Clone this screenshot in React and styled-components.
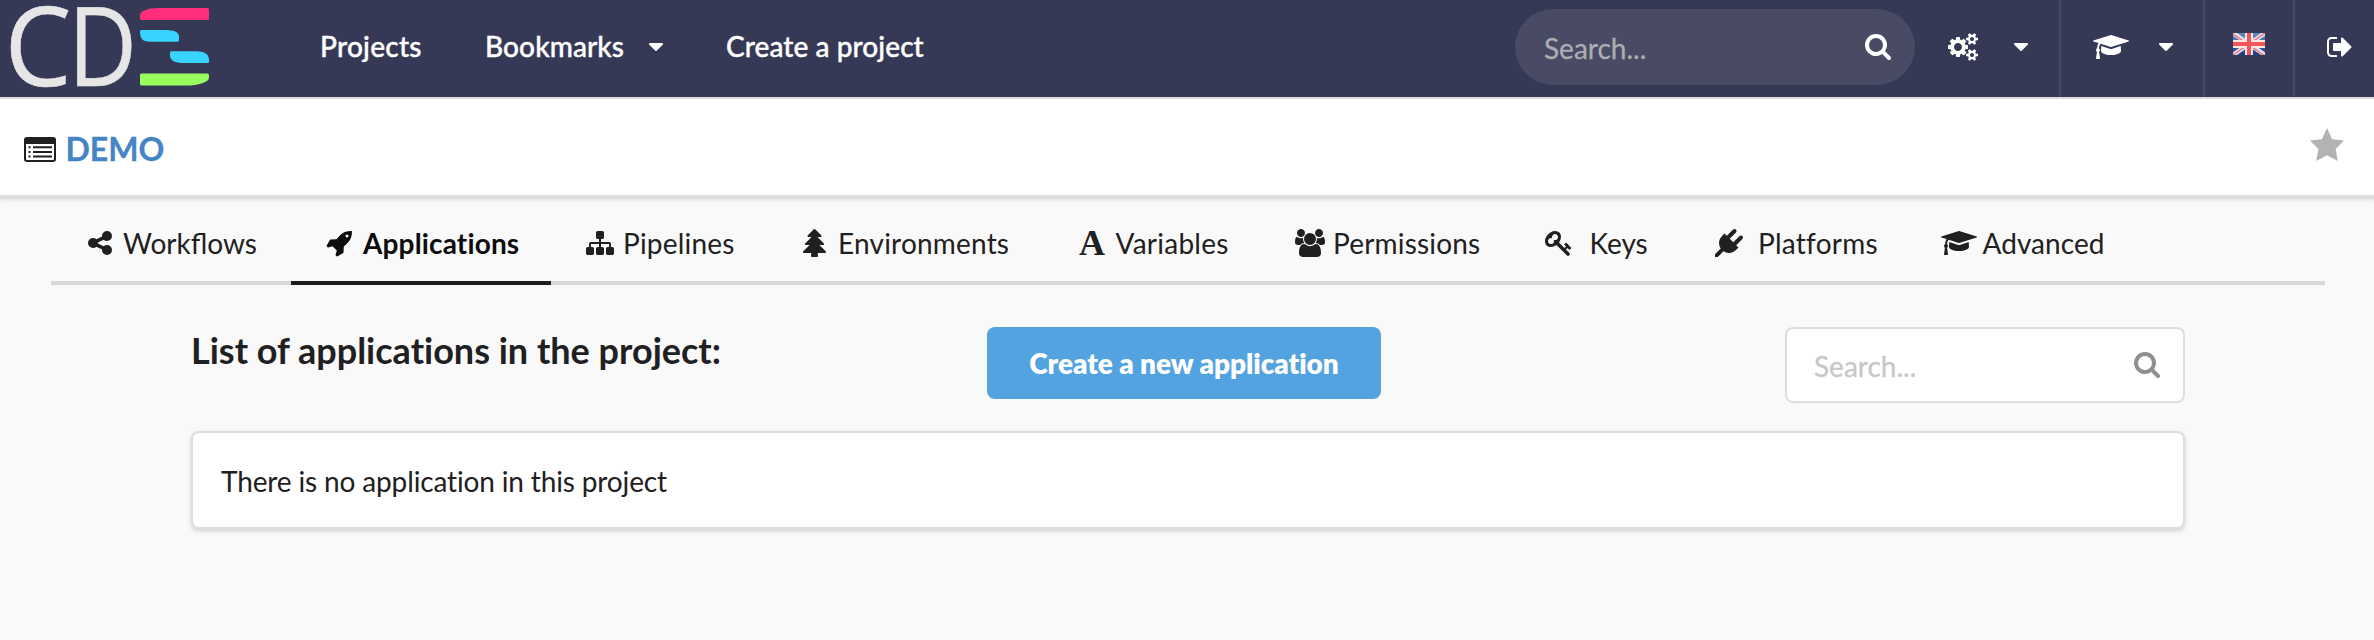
import React from 'react';
import styled, { createGlobalStyle } from 'styled-components';

const GlobalStyle = createGlobalStyle`
  *, *::before, *::after { box-sizing: border-box; }
  html, body { margin: 0; background: #f9f9f9; }
  body {
    font-family: Lato, "Liberation Sans", sans-serif;
    font-size: 28px;
    line-height: 40px;
    color: #1f2021;
  }
  svg { display: block; flex: none; }
`;

/* Icon outlines on a 1792 unit grid, 64 units per pixel at the base size */
const ICONS = {
  search: { x: 64, w: 1664, d: 'M1152 704q0-185-131.5-316.5t-316.5-131.5-316.5 131.5-131.5 316.5 131.5 316.5 316.5 131.5 316.5-131.5 131.5-316.5zm512 832q0 52-38 90t-90 38q-54 0-90-38l-343-342q-179 124-399 124-143 0-273.5-55.5t-225-150-150-225-55.5-273.5 55.5-273.5 150-225 225-150 273.5-55.5 273.5 55.5 225 150 150 225 55.5 273.5q0 220-124 399l343 343q37 37 37 90z' },
  cogs: { x: 0, w: 1920, d: 'M832 896q0-106-75-181t-181-75-181 75-75 181 75 181 181 75 181-75 75-181zm768 512q0-52-38-90t-90-38-90 38-38 90q0 53 37.5 90.5t90.5 37.5 90.5-37.5 37.5-90.5zm0-1024q0-52-38-90t-90-38-90 38-38 90q0 53 37.5 90.5t90.5 37.5 90.5-37.5 37.5-90.5zm-384 421v185q0 10-7 19.5t-16 10.5l-155 24q-11 35-32 76 34 48 90 115 7 11 7 20 0 12-7 19-23 30-82.5 89.5t-78.5 59.5q-11 0-21-7l-115-90q-37 19-77 31-11 108-23 155-7 24-30 24h-186q-11 0-20-7.5t-10-17.5l-23-153q-34-10-75-31l-118 89q-7 7-20 7-11 0-21-8-144-133-144-160 0-9 7-19 10-14 41-53t47-61q-23-44-35-82l-152-24q-10-1-17-9.5t-7-19.5v-185q0-10 7-19.5t16-10.5l155-24q11-35 32-76-34-48-90-115-7-11-7-20 0-12 7-20 22-30 82-89t79-59q11 0 21 7l115 90q34-18 77-32 11-108 23-154 7-24 30-24h186q11 0 20 7.5t10 17.5l23 153q34 10 75 31l118-89q8-7 20-7 11 0 21 8 144 133 144 160 0 8-7 19-12 16-42 54t-45 60q23 48 34 82l152 23q10 2 17 10.5t7 19.5zm640 533v140q0 16-149 31-12 27-30 52 51 113 51 138 0 4-4 7-122 71-124 71-8 0-46-47t-52-68q-20 2-30 2t-30-2q-14 21-52 68t-46 47q-2 0-124-71-4-3-4-7 0-25 51-138-18-25-30-52-149-15-149-31v-140q0-16 149-31 13-29 30-52-51-113-51-138 0-4 4-7 4-2 35-20t59-34 30-16q8 0 46 46.5t52 67.5q20-2 30-2t30 2q51-71 92-112l6-2q4 0 124 70 4 3 4 7 0 25-51 138 17 23 30 52 149 15 149 31zm0-1024v140q0 16-149 31-12 27-30 52 51 113 51 138 0 4-4 7-122 71-124 71-8 0-46-47t-52-68q-20 2-30 2t-30-2q-14 21-52 68t-46 47q-2 0-124-71-4-3-4-7 0-25 51-138-18-25-30-52-149-15-149-31v-140q0-16 149-31 13-29 30-52-51-113-51-138 0-4 4-7 4-2 35-20t59-34 30-16q8 0 46 46.5t52 67.5q20-2 30-2t30 2q51-71 92-112l6-2q4 0 124 70 4 3 4 7 0 25-51 138 17 23 30 52 149 15 149 31z' },
  graduation: { x: 0, w: 2304, d: 'M1774 836l18 316q4 69-82 128t-235 93.5-323 34.5-323-34.5-235-93.5-82-128l18-316 574 181q22 7 48 7t48-7zm530-324q0 23-22 31l-1120 352q-4 1-10 1t-10-1l-652-206q-43 34-71 111.5t-34 178.5q63 36 63 109 0 69-58 107l58 433q2 14-8 25-9 11-24 11h-192q-15 0-24-11-10-11-8-25l58-433q-58-38-58-107 0-73 65-111 11-207 98-330l-333-104q-22-8-22-31t22-31l1120-352q4-1 10-1t10 1l1120 352q22 8 22 31z' },
  signOut: { x: 64, w: 1600, d: 'M704 1440q0 4 1 20t.5 26.5-3 23.5-10 19.5-20.5 6.5h-320q-119 0-203.5-84.5t-84.5-203.5v-704q0-119 84.5-203.5t203.5-84.5h320q13 0 22.5 9.5t9.5 22.5q0 4 1 20t.5 26.5-3 23.5-10 19.5-20.5 6.5h-320q-66 0-113 47t-47 113v704q0 66 47 113t113 47h312l11.5 1 11.5 3 8 5.5 7 9 2 13.5zm928-544q0 26-19 45l-544 544q-19 19-45 19t-45-19-19-45v-288h-448q-26 0-45-19t-19-45v-384q0-26 19-45t45-19h448v-288q0-26 19-45t45-19 45 19l544 544q19 19 19 45z' },
  share: { x: 128, w: 1536, d: 'M1344 1024q133 0 226.5 93.5t93.5 226.5-93.5 226.5-226.5 93.5-226.5-93.5-93.5-226.5q0-12 2-34l-360-180q-92 86-218 86-133 0-226.5-93.5t-93.5-226.5 93.5-226.5 226.5-93.5q126 0 218 86l360-180q-2-22-2-34 0-133 93.5-226.5t226.5-93.5 226.5 93.5 93.5 226.5-93.5 226.5-226.5 93.5q-126 0-218-86l-360 180q2 22 2 34t-2 34l360 180q92-86 218-86z' },
  rocket: { x: 64, w: 1600, d: 'M1440 448q0-40-28-68t-68-28-68 28-28 68 28 68 68 28 68-28 28-68zm224-288q0 249-75.5 430.5t-253.5 360.5q-81 80-195 176l-20 379q-2 16-16 26l-384 224q-7 4-16 4-12 0-23-9l-64-64q-13-14-8-32l85-276-281-281-276 85q-3 1-9 1-14 0-23-9l-64-64q-17-19-5-39l224-384q10-14 26-16l379-20q96-114 176-195 188-187 358-258t431-71q14 0 24 9.5t10 22.5z' },
  sitemap: { x: 0, w: 1792, d: 'M1792 1248v320q0 40-28 68t-68 28h-320q-40 0-68-28t-28-68v-320q0-40 28-68t68-28h96v-192h-512v192h96q40 0 68 28t28 68v320q0 40-28 68t-68 28h-320q-40 0-68-28t-28-68v-320q0-40 28-68t68-28h96v-192h-512v192h96q40 0 68 28t28 68v320q0 40-28 68t-68 28h-320q-40 0-68-28t-28-68v-320q0-40 28-68t68-28h96v-192q0-52 38-90t90-38h512v-192h-96q-40 0-68-28t-28-68v-320q0-40 28-68t68-28h320q40 0 68 28t28 68v320q0 40-28 68t-68 28h-96v192h512q52 0 90 38t38 90v192h96q40 0 68 28t28 68z' },
  tree: { x: 160, w: 1472, d: 'M1632 1472q0 26-19 45t-45 19h-462q1 17 6 87.5t5 108.5q0 25-18 42.5t-43 17.5h-320q-25 0-43-17.5t-18-42.5q0-38 5-108.5t6-87.5h-462q-26 0-45-19t-19-45 19-45l402-403h-229q-26 0-45-19t-19-45 19-45l402-403h-197q-26 0-45-19t-19-45 19-45l384-384q19-19 45-19t45 19l384 384q19 19 19 45t-19 45-45 19h-197l402 403q19 19 19 45t-19 45-45 19h-229l402 403q19 19 19 45z' },
  users: { x: 0, w: 1920, d: 'M593 896q-162 5-265 128h-134q-82 0-138-40.5t-56-118.5q0-353 124-353 6 0 43.5 21t97.5 42.5 119 21.5q67 0 133-23-5 37-5 66 0 139 81 256zm1071 637q0 120-73 189.5t-194 69.5h-874q-121 0-194-69.5t-73-189.5q0-53 3.5-103.5t14-109 26.5-108.5 43-97.5 62-81 85.5-53.5 111.5-20q10 0 43 21.5t73 48 107 48 135 21.5 135-21.5 107-48 73-48 43-21.5q61 0 111.5 20t85.5 53.5 62 81 43 97.5 26.5 108.5 14 109 3.5 103.5zm-1024-1277q0 106-75 181t-181 75-181-75-75-181 75-181 181-75 181 75 75 181zm704 384q0 159-112.5 271.5t-271.5 112.5-271.5-112.5-112.5-271.5 112.5-271.5 271.5-112.5 271.5 112.5 112.5 271.5zm576 225q0 78-56 118.5t-138 40.5h-134q-103-123-265-128 81-117 81-256 0-29-5-66 66 23 133 23 59 0 119-21.5t97.5-42.5 43.5-21q124 0 124 353zm-128-609q0 106-75 181t-181 75-181-75-75-181 75-181 181-75 181 75 75 181z' },
  key: { x: 64, w: 1792, d: 'M832 512q0-80-56-136t-136-56-136 56-56 136q0 42 19 83-41-19-83-19-80 0-136 56t-56 136 56 136 136 56 136-56 56-136q0-42-19-83 41 19 83 19 80 0 136-56t56-136zm851 704q0 17-49 66t-66 49q-9 0-28.5-16t-36.5-33-38.5-40-24.5-26l-96 96 220 220q28 28 28 68 0 42-39 81t-81 39q-40 0-68-28l-671-671q-176 131-365 131-163 0-265.5-102.5t-102.5-265.5q0-160 95-313t248-248 313-95q163 0 265.5 102.5t102.5 265.5q0 189-131 365l355 355 96-96q-3-3-26-24.5t-40-38.5-33-36.5-16-28.5q0-17 49-66t66-49q13 0 23 10 6 6 46 44.5t82 79.5 86.5 86 73 78 28.5 41z' },
  plug: { x: 0, w: 1792, d: 'M1755 453q37 38 37 90.5t-37 90.5l-401 400 150 150-160 160q-163 163-389.5 186.5t-411.5-100.5l-362 362h-181v-181l362-362q-124-185-100.5-411.5t186.5-389.5l160-160 150 150 400-401q38-37 91-37t90 37 37 90.5-37 90.5l-400 401 234 234 401-400q38-37 91-37t90 37z' },
  caret: { x: 384, w: 896, d: 'M1280 704q0 26-19 45l-384 384q-19 19-45 19t-45-19l-384-384q-19-19-19-45t19-45 45-19h768q26 0 45 19t19 45z' },
};

function Icon({ name }) {
  const { x, w, d } = ICONS[name];
  return (
    <svg width={w / 64} height="28" viewBox={`${x} 0 ${w} 1792`} fill="currentColor" overflow="visible" aria-hidden="true">
      <path d={d} />
    </svg>
  );
}

const Page = styled.div`
  min-height: 100vh;
  background: #f9f9f9;
`;

const TopBar = styled.header`
  display: flex;
  height: 99px;
  background: #353955;
  border-bottom: 2px solid #dedede;
  color: #fff;
`;

const LogoLink = styled.a`
  width: 320px;
  flex: none;
`;

const NavItem = styled.a`
  display: flex;
  align-items: center;
  height: 92px;
  flex: none;
  width: ${(p) => p.$width}px;
  font-weight: 500;
  letter-spacing: ${(p) => p.$track || 0}px;
  white-space: nowrap;
  -webkit-text-stroke: 0.4px #fff;
`;

const NavCaret = styled.span`
  margin-left: auto;
  margin-right: 63px;
  padding-top: 2px;
`;

const GlobalSearch = styled.div`
  display: flex;
  align-items: center;
  justify-content: space-between;
  width: 400px;
  height: 76px;
  margin: 9px 0 0 auto;
  padding: 2px 23px 0 29px;
  border-radius: 38px;
  background: #484b63;
`;

const Placeholder = styled.span`
  color: ${(p) => p.$color};
  -webkit-text-stroke: 0.3px ${(p) => p.$color};
`;

const MenuCell = styled.div`
  display: flex;
  align-items: center;
  justify-content: space-between;
  height: 97px;
  padding-bottom: 3px;
  width: ${(p) => p.$width}px;
  padding-left: ${(p) => p.$left}px;
  padding-right: ${(p) => p.$right}px;
  border-right: ${(p) => (p.$last ? 'none' : '2px solid #45496a')};
`;

const FlagBox = styled.span`
  padding-bottom: 6px;
`;

const ProjectBar = styled.section`
  display: flex;
  align-items: center;
  justify-content: space-between;
  height: 96px;
  padding: 0 30px 0 24px;
  background: #fff;
  box-shadow: 0 4px 0 #dedede, 0 4px 5px rgba(0, 0, 0, 0.18);
`;

const ProjectName = styled.h1`
  display: flex;
  align-items: center;
  gap: 9.5px;
  margin: 0;
  padding-top: 4px;
  font-size: 32px;
  font-weight: 700;
  color: #4585c6;
  -webkit-text-stroke: 0.3px #4585c6;
`;

const StarBox = styled.span`
  padding-bottom: 5px;
`;

const Tabs = styled.nav`
  display: flex;
  width: 2274px;
  height: 90px;
  margin-left: 51px;
  border-bottom: 4px solid #d8d8d8;
`;

const Tab = styled.a`
  display: flex;
  align-items: center;
  flex: none;
  width: ${(p) => p.$width}px;
  height: 90px;
  padding: 10px 0 0 32px;
  border-bottom: 4px solid ${(p) => (p.$active ? '#1b1c1d' : 'transparent')};
  font-weight: ${(p) => (p.$active ? 700 : 400)};
  letter-spacing: ${(p) => p.$track || 0}px;
  color: ${(p) => (p.$active ? '#0d0d0e' : '#1f2021')};
  white-space: nowrap;
`;

const TabIcon = styled.span`
  display: flex;
  justify-content: center;
  width: 33px;
  height: 28px;
  margin-right: ${(p) => (p.$wide ? 13 : 7)}px;
`;

const SerifLetter = styled.span`
  font: 700 36px/28px "Liberation Serif", serif;
`;

const Content = styled.main`
  width: 1994px;
  margin: 42px 0 0 191px;
`;

const ListHeader = styled.div`
  display: flex;
  justify-content: space-between;
  align-items: flex-start;
  height: 104px;
`;

const ListTitle = styled.h2`
  width: 594px;
  margin: 0;
  padding-top: 3px;
  font-size: 36px;
  line-height: 40px;
  font-weight: 700;
  font-variant-ligatures: none;
  white-space: nowrap;
`;

const CreateButton = styled.button`
  width: 394px;
  height: 72px;
  margin-right: 202px;
  padding: 0 0 1px;
  border: 0;
  border-radius: 8px;
  background: #54a3e1;
  color: #fff;
  font: 800 28px/40px Lato, "Liberation Sans", sans-serif;
  letter-spacing: -0.05px;
  white-space: nowrap;
`;

const ListSearch = styled.div`
  display: flex;
  align-items: center;
  justify-content: space-between;
  width: 400px;
  height: 76px;
  padding: 2px 22px 0 27px;
  border: 2px solid #dededf;
  border-radius: 8px;
  background: #fff;
  color: #8f8f8f;
`;

const EmptyCard = styled.div`
  height: 98px;
  padding: 28px;
  border: 2px solid #dededf;
  border-radius: 8px;
  background: #fff;
  box-shadow: 0 2px 4px rgba(34, 36, 38, 0.18);
  letter-spacing: -0.14px;
`;

function Logo() {
  return (
    <svg width="220" height="97" viewBox="0 0 220 97" aria-label="CDS">
      <g fill="#e6e6e6" stroke="#e6e6e6" strokeWidth="0.5" fontFamily='"Open Sans", "Noto Sans", sans-serif' fontSize="109">
        <text x="4.500" y="86" textLength="67" lengthAdjust="spacingAndGlyphs">C</text>
        <text x="68" y="86" textLength="69" lengthAdjust="spacingAndGlyphs">D</text>
      </g>
      <path fill="#ff2f7e" d="M159 8H207.500Q209 8 209 9.500V18.500Q209 20 207.500 20H141.500Q140 20 140 18V15.500C140 11.500 147 8 159 8Z" />
      <path fill="#38d4ff" d="M141.500 30H166Q179 30 179 37V40Q179 41.700 177.500 41.700H150Q140 41.700 140 33V31.500Q140 30 141.500 30Z" />
      <path fill="#38d4ff" d="M171.500 51.300H196Q209 51.300 209 60V61.500Q209 63 207.500 63H184Q170 63 170 55.500V53Q170 51.300 171.500 51.300Z" />
      <path fill="#9aff5c" d="M141.500 73.500H207Q209 73.500 209 75.500V77.500C209 82 199 85.600 185 85.600H141.500Q140 85.600 140 84V75Q140 73.500 141.500 73.500Z" />
    </svg>
  );
}

function ListWindowIcon() {
  return (
    <svg width="32" height="25" viewBox="0 0 32 25" aria-hidden="true">
      <path fill="#1f2021" fillRule="evenodd" d="M3 0H29Q32 0 32 3V22Q32 25 29 25H3Q0 25 0 22V3Q0 0 3 0ZM2 7V22Q2 23 3 23H29Q30 23 30 22V7Z" />
      <path stroke="#1f2021" strokeWidth="2" d="M4.500 10.300h2M9 10.300h19M4.500 15h2M9 15h19M4.500 19.600h2M9 19.600h19" />
    </svg>
  );
}

function FlagIcon() {
  return (
    <svg width="32" height="22" viewBox="0 0 32 22" aria-hidden="true">
      <defs>
        <linearGradient id="flagBlue" x1="0" y1="0" x2="0" y2="1">
          <stop offset="0" stopColor="#6687c0" />
          <stop offset="1" stopColor="#173c85" />
        </linearGradient>
        <clipPath id="flagClip"><path d="M0 0h32v22H0z" /></clipPath>
      </defs>
      <g clipPath="url(#flagClip)">
        <path fill="url(#flagBlue)" d="M0 0h32v22H0z" />
        <path stroke="#dfe4f0" strokeWidth="4.500" d="M0 0L32 22M32 0L0 22" />
        <path stroke="#ee7f84" strokeWidth="1.600" d="M0 1L32 23M32 0L0 22" />
        <path stroke="#fbe9ea" strokeWidth="8" d="M16 0V22M0 11H32" />
        <path stroke="#f4545a" strokeWidth="4" d="M16 0V22M0 11H32" />
      </g>
    </svg>
  );
}

function StarIcon() {
  return (
    <svg width="34" height="33" viewBox="0 0 34 33" aria-hidden="true">
      <path fill="#b3b3b3" d="M17 0L22.200 11.200L34 12.600L25.600 21L27.800 33L17 27.300L6.200 33L8.400 21L0 12.600L11.800 11.200Z" />
    </svg>
  );
}

const TABS = [
  { label: 'Workflows', icon: 'share', width: 240 },
  { label: 'Applications', icon: 'rocket', width: 260, track: 0.15, active: true },
  { label: 'Pipelines', icon: 'sitemap', width: 215, track: 0.2 },
  { label: 'Environments', icon: 'tree', width: 277.5, track: 0.2 },
  { label: 'Variables', width: 217.5, track: 0.25 },
  { label: 'Permissions', icon: 'users', width: 250.5, track: 0.17 },
  { label: 'Keys', icon: 'key', width: 168.5, wide: true },
  { label: 'Platforms', icon: 'plug', width: 230.5, track: 0.25, wide: true },
  { label: 'Advanced', icon: 'graduation', width: 225, track: 0.05 },
];

export default function App() {
  return (
    <Page>
      <GlobalStyle />
      <TopBar>
        <LogoLink><Logo /></LogoLink>
        <NavItem $width={165} $track={0.25}>Projects</NavItem>
        <NavItem $width={241} $track={0.1}>
          Bookmarks
          <NavCaret><Icon name="caret" /></NavCaret>
        </NavItem>
        <NavItem $width={240} $track={0.08}>Create a project</NavItem>
        <GlobalSearch>
          <Placeholder $color="#adadb1">Search...</Placeholder>
          <Icon name="search" />
        </GlobalSearch>
        <MenuCell $width={146} $left={34} $right={31}>
          <Icon name="cogs" />
          <Icon name="caret" />
        </MenuCell>
        <MenuCell $width={144} $left={32} $right={30}>
          <Icon name="graduation" />
          <Icon name="caret" />
        </MenuCell>
        <MenuCell $width={90} $left={28} $right={28}>
          <FlagBox><FlagIcon /></FlagBox>
        </MenuCell>
        <MenuCell $width={79} $left={31.5} $right={20} $last>
          <Icon name="signOut" />
        </MenuCell>
      </TopBar>
      <ProjectBar>
        <ProjectName><ListWindowIcon />DEMO</ProjectName>
        <StarBox><StarIcon /></StarBox>
      </ProjectBar>
      <Tabs>
        {TABS.map((t) => (
          <Tab key={t.label} $width={t.width} $track={t.track} $active={t.active}>
            <TabIcon $wide={t.wide}>
              {t.icon ? <Icon name={t.icon} /> : <SerifLetter aria-hidden="true">A</SerifLetter>}
            </TabIcon>
            {t.label}
          </Tab>
        ))}
      </Tabs>
      <Content>
        <ListHeader>
          <ListTitle>List of applications in the project:</ListTitle>
          <CreateButton>Create a new application</CreateButton>
          <ListSearch>
            <Placeholder $color="#c7c7c7">Search...</Placeholder>
            <Icon name="search" />
          </ListSearch>
        </ListHeader>
        <EmptyCard>There is no application in this project</EmptyCard>
      </Content>
    </Page>
  );
}
